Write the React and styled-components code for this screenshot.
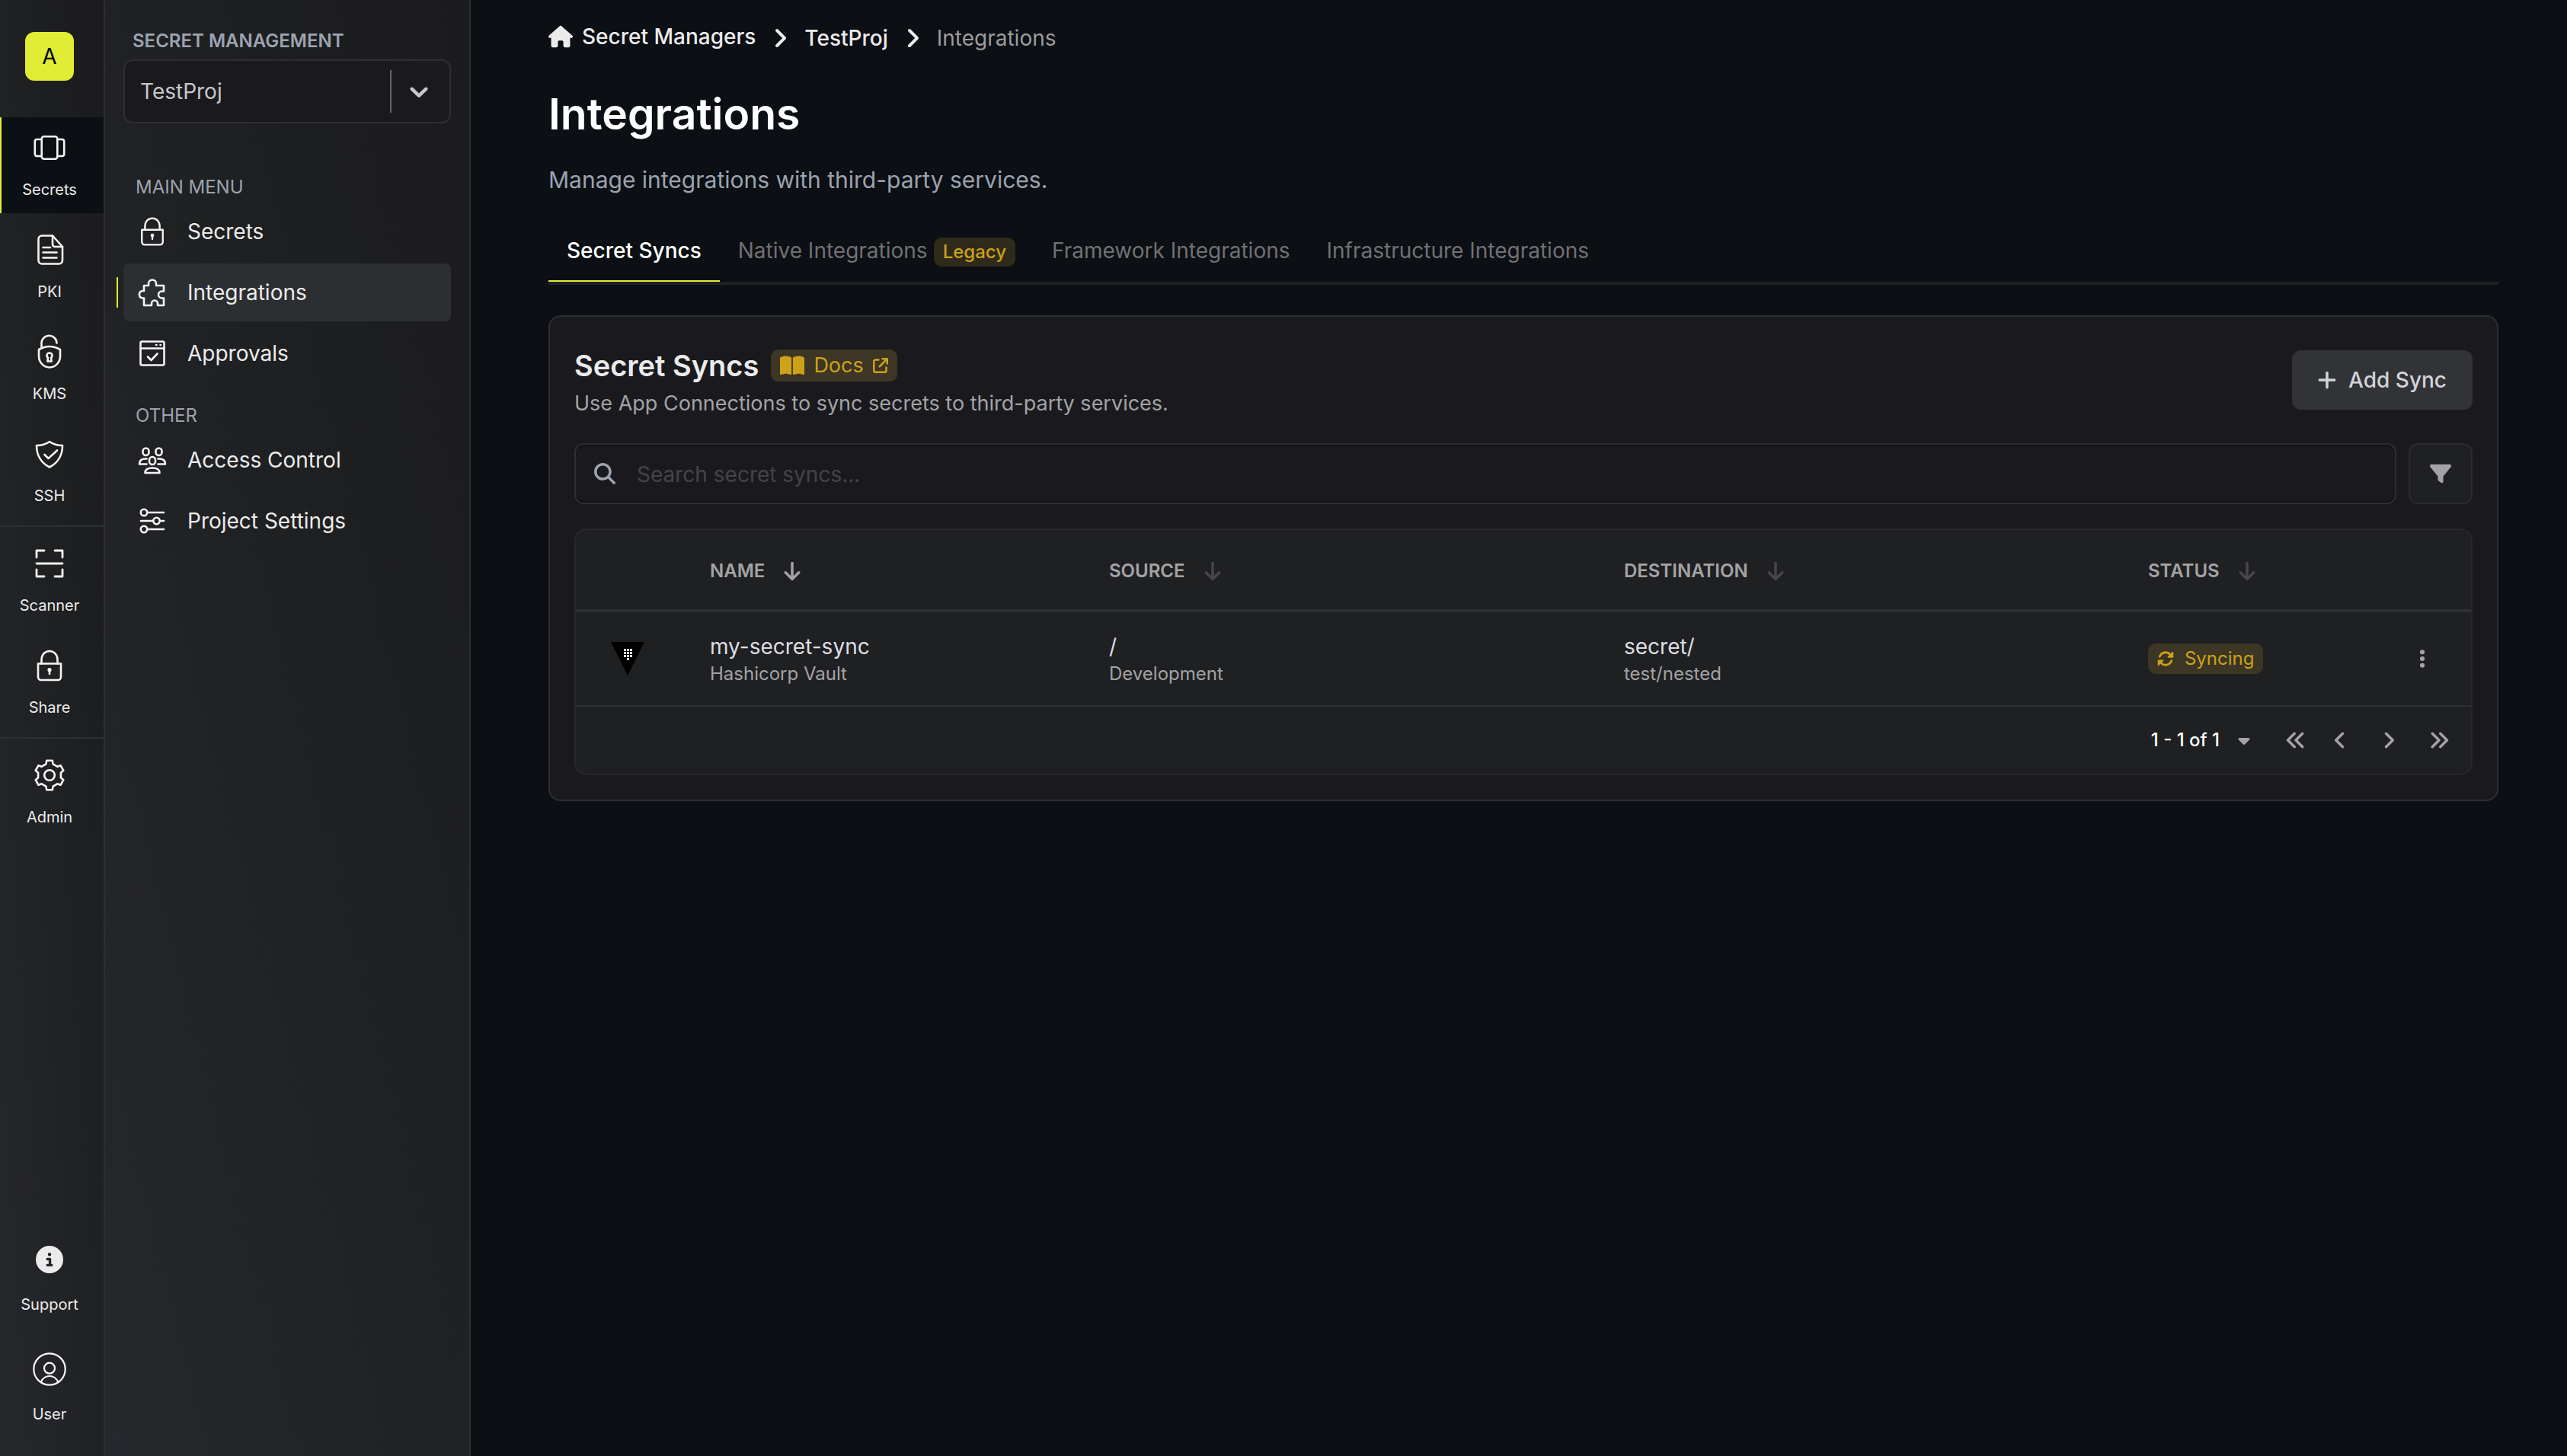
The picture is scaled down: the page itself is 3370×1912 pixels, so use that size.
import React from "react"
import styled, { createGlobalStyle } from "styled-components"
import {
  FaAngleLeft,
  FaAngleRight,
  FaAnglesLeft,
  FaAnglesRight,
  FaArrowDown,
  FaArrowUpRightFromSquare,
  FaBookOpen,
  FaCaretDown,
  FaCircleInfo,
  FaEllipsisVertical,
  FaFilter,
  FaHouse,
  FaMagnifyingGlass,
  FaPlus,
  FaRotate,
} from "react-icons/fa6"

const colors = {
  page: "#0c0f14",
  panel: "#1a1a1e",
  table: "#1f2022",
  line: "#2d2f33",
  hover: "#2c2f32",
  text: "#ebebeb",
  muted: "#a3a3a5",
  label: "#9ca3af",
  dim: "#707173",
  primary: "#e0ed34",
  yellow: "#cba21a",
}

const GlobalStyle = createGlobalStyle`
  *, *::before, *::after {
    box-sizing: border-box;
  }
  body {
    margin: 0;
    background: ${colors.page};
    color: ${colors.text};
    font-family: Inter, "Liberation Sans", sans-serif;
    font-size: 28px;
    line-height: 40px;
  }
  button, input, select {
    font: inherit;
    color: inherit;
    margin: 0;
    padding: 0;
    border: 0;
    background: none;
  }
  button {
    cursor: pointer;
  }
  a {
    color: inherit;
    text-decoration: none;
  }
  h1, h2, p, ol, ul {
    margin: 0;
    padding: 0;
    list-style: none;
  }
  svg {
    display: block;
    flex: none;
  }
`

const Layout = styled.div`
  display: flex;
  min-height: 100vh;
`

/* ---------- left rail ---------- */

const Rail = styled.nav`
  display: flex;
  flex-direction: column;
  flex: none;
  width: 138px;
  padding-bottom: 24px;
  border-right: 2px solid ${colors.line};
  background: linear-gradient(to top right, #27282d, #1f2123, #1b1b1d);
`

const OrgButton = styled.button`
  width: 64px;
  height: 64px;
  margin: 42px 0 48px 33px;
  border-radius: 12px;
  background: ${colors.primary};
  color: #000;
`

const RailGroup = styled.div`
  display: flex;
  flex-direction: column;
  gap: 8px;
  padding-bottom: 8px;
  margin-bottom: ${({ $last }) => ($last ? "auto" : "8px")};
  border-bottom: ${({ $last }) => ($last ? "0" : `2px solid ${colors.line}`)};
`

const RailBottom = styled.div`
  display: flex;
  flex-direction: column;
  gap: 14px;
`

const RailLink = styled.a`
  display: flex;
  flex-direction: column;
  align-items: center;
  gap: ${({ $wide }) => ($wide ? "20px" : "16px")};
  padding: 16px 8px 16px 0;
  border-left: 2px solid ${({ $active }) => ($active ? colors.primary : "transparent")};
  background: ${({ $active }) => ($active ? colors.page : "none")};
  font-size: 20px;
  line-height: 30px;
`

const RailIcon = styled.span`
  display: grid;
  place-items: center;
  width: 48px;
  height: 48px;
`

const LineIcon = styled.svg`
  width: ${({ $size }) => $size}px;
  height: ${({ $size }) => $size}px;
  fill: none;
  stroke: #f4f4f4;
  stroke-width: ${({ $stroke }) => $stroke || 2.6};
  stroke-linecap: round;
  stroke-linejoin: round;
`

/* ---------- project sidebar ---------- */

const Sidebar = styled.aside`
  flex: none;
  width: 480px;
  padding: 36px 24px;
  border-right: 2px solid ${colors.line};
  background: linear-gradient(to top right, #27282d, #1f2123, #1b1b1d);
`

const ProjectLabel = styled.label`
  display: block;
  padding: 0 12px 6px;
  color: ${colors.label};
  font-size: 24px;
  font-weight: 600;
  line-height: 36px;
`

const ProjectSelect = styled.div`
  display: flex;
  align-items: center;
  height: 84px;
  border: 2px solid ${colors.line};
  border-radius: 12px;
  background: ${colors.panel};
  color: #c8c8c9;

  select {
    flex: 1;
    height: 100%;
    padding-left: 20px;
    appearance: none;
    outline: none;
  }
  svg {
    width: 40px;
    height: 40px;
    margin: 0 20px 0 16px;
    fill: currentColor;
    pointer-events: none;
  }
`

const Separator = styled.span`
  width: 2px;
  height: 56px;
  background: #626365;
`

const MenuTitle = styled.p`
  padding: 4px 16px 0;
  margin-top: ${({ $first }) => ($first ? "60px" : "20px")};
  color: ${colors.label};
  font-size: 24px;
  line-height: 40px;
`

const Menu = styled.ul`
  display: flex;
  flex-direction: column;
  gap: 4px;
`

const MenuLink = styled.a`
  position: relative;
  display: flex;
  align-items: center;
  gap: 26px;
  height: 76px;
  padding-left: 18px;
  border-radius: 8px;
  background: ${({ $active }) => ($active ? colors.hover : "none")};

  &::before {
    content: "";
    display: ${({ $active }) => ($active ? "block" : "none")};
    position: absolute;
    left: -9px;
    top: 18px;
    width: 2px;
    height: 40px;
    background: ${colors.primary};
  }
`

const MenuIcon = styled.span`
  display: grid;
  place-content: center;
  width: 40px;
  height: 40px;
`

/* ---------- main area ---------- */

const Main = styled.main`
  flex: 1;
  min-width: 0;
  padding: 30px 0 60px 12px;
`

const Container = styled.div`
  width: 100%;
  max-width: 2560px;
  margin: 0 auto;
`

const Crumbs = styled.ol`
  display: flex;
  align-items: center;
  height: 40px;

  li {
    display: flex;
    align-items: center;
  }
  li > svg {
    margin: 0 16px;
  }
`

const Crumb = styled.a`
  display: flex;
  align-items: center;
  gap: 12px;
  padding-bottom: ${({ $home }) => ($home ? "4px" : "0")};
  color: ${({ $current }) => ($current ? "#9c9c9e" : colors.text)};
  font-weight: ${({ $current }) => ($current ? 400 : 500)};
`

const Title = styled.h1`
  margin-top: 44px;
  color: #fff;
  font-size: 57px;
  font-weight: 600;
  line-height: 72px;
`

const Subtitle = styled.p`
  margin: 26px 0 28px;
  color: ${colors.label};
  font-size: 30px;
  line-height: 48px;
`

const Tabs = styled.div`
  display: flex;
  margin-bottom: 40px;
  border-bottom: 4px solid #1f2023;
`

const Tab = styled.button`
  display: flex;
  align-items: center;
  gap: 8px;
  height: 82px;
  padding: 2px 24px 0;
  border-bottom: 2px solid ${({ $active }) => ($active ? colors.primary : "transparent")};
  color: ${({ $active }) => ($active ? "#fff" : colors.dim)};
  font-weight: ${({ $active }) => ($active ? 500 : 400)};
`

const Badge = styled.span`
  display: inline-flex;
  align-items: center;
  gap: ${({ $tall }) => ($tall ? "12px" : "14px")};
  height: ${({ $tall }) => ($tall ? "42px" : "40px")};
  padding: 0 12px;
  border-radius: 10px;
  background: #3d3624;
  color: ${colors.yellow};
  font-size: ${({ $tall }) => ($tall ? "27px" : "24px")};
`

const LegacyBadge = styled(Badge)`
  height: 38px;
  margin-top: 4px;
  background: #302a1b;
  font-weight: 500;
`

const Panel = styled.section`
  padding: 32px;
  border: 2px solid ${colors.line};
  border-radius: 16px;
  background: ${colors.panel};
`

const PanelHead = styled.div`
  display: flex;
  align-items: center;
  justify-content: space-between;
  margin-bottom: 32px;
`

const PanelTitle = styled.div`
  display: flex;
  align-items: center;
  gap: 16px;
  padding-top: 2px;

  h2 {
    font-size: 38px;
    font-weight: 600;
    line-height: 60px;
  }
`

const PanelText = styled.p`
  color: ${colors.muted};
  font-size: 27px;
`

const AddButton = styled.button`
  display: flex;
  align-items: center;
  gap: 14px;
  height: 78px;
  padding: 0 34px 0 32px;
  border-radius: 12px;
  background: #323337;
  color: #d2d4d8;
  font-weight: 500;
`

const Toolbar = styled.div`
  display: flex;
  gap: 16px;
  margin-bottom: 32px;
`

const SearchBox = styled.label`
  display: flex;
  flex: 1;
  align-items: center;
  gap: 28px;
  height: 80px;
  padding: 0 24px;
  border: 2px solid ${colors.line};
  border-radius: 12px;
  box-shadow: inset 0 2px 0 #101115, inset 0 -2px 0 #101115;
  color: ${colors.label};

  input {
    flex: 1;
    height: 100%;
    padding-top: 2px;
    outline: none;
  }
  input::placeholder {
    color: #434448;
    opacity: 1;
  }
`

const FilterButton = styled.button`
  display: grid;
  place-items: center;
  width: 84px;
  height: 80px;
  border: 2px solid #2a2b2e;
  border-radius: 12px;
  background: ${colors.table};
  color: ${colors.muted};
`

const TableBox = styled.div`
  border: 2px solid #27282b;
  border-radius: 16px;
  background: ${colors.table};
  overflow: hidden;
`

const Table = styled.table`
  width: 100%;
  border-collapse: separate;
  border-spacing: 0;
  table-layout: fixed;
  text-align: left;

  th, td {
    padding: 0 40px;
    border-bottom: 2px solid ${colors.line};
  }
  th {
    height: 108px;
    padding-top: 4px;
    border-bottom-width: 4px;
  }
  td {
    height: 124px;
  }
`

const HeadCell = styled.th`
  width: ${({ $width }) => $width || "auto"};
`

const SortButton = styled.button`
  display: flex;
  align-items: center;
  gap: 22px;
  color: ${colors.muted};
  font-size: 24px;
  font-weight: 600;

  svg {
    opacity: ${({ $sorted }) => ($sorted ? 1 : 0.3)};
  }
`

const CellText = styled.p`
  color: #dcdde1;
`

const CellNote = styled.p`
  color: ${colors.muted};
  font-size: 24px;
  line-height: 32px;
`

const KebabButton = styled.button`
  display: grid;
  place-items: center;
  width: 48px;
  height: 48px;
  color: ${colors.muted};
`

const Pagination = styled.div`
  display: flex;
  align-items: center;
  justify-content: flex-end;
  gap: 8px;
  height: 88px;
  padding-right: 12px;
`

const RangeButton = styled.button`
  display: flex;
  align-items: center;
  gap: 20px;
  margin-right: 18px;
  color: #fff;
  font-size: 24px;
  font-weight: 500;

  svg {
    color: ${colors.muted};
  }
`

const PageButtons = styled.div`
  display: flex;
`

const PageButton = styled.button`
  display: grid;
  place-items: center;
  width: ${({ $double }) => ($double ? "60px" : "56px")};
  height: 56px;
  color: ${colors.muted};
`

/* ---------- icons ---------- */

const CarouselIcon = () => (
  <LineIcon $size={48} viewBox="0 0 48 48" aria-hidden="true">
    <rect x="13.7" y="9.3" width="20.6" height="29.4" rx="3" />
    <path d="M13.7 13H7.5a2.7 2.7 0 0 0-2.7 2.7v16.6A2.7 2.7 0 0 0 7.5 35h6.2M34.3 13h6.2a2.7 2.7 0 0 1 2.7 2.7v16.6a2.7 2.7 0 0 1-2.7 2.7h-6.2" />
  </LineIcon>
)

const DocumentIcon = () => (
  <LineIcon $size={48} viewBox="0 0 48 48" aria-hidden="true">
    <path d="M28 5.5H14a4.5 4.5 0 0 0-4.5 4.5v28a4.5 4.5 0 0 0 4.5 4.5h22.5a4.5 4.5 0 0 0 4.5-4.5V20z" />
    <path d="M28 5.5V17a3 3 0 0 0 3 3h10M15.5 21H25M15.5 27.5h18M15.5 34.5h18" />
  </LineIcon>
)

const ShieldLockIcon = () => (
  <LineIcon $size={48} viewBox="0 0 48 48" aria-hidden="true">
    <path d="M24 17c4.5 0 9.5 1.5 14 4v8.5c0 8-6 15-14 15s-14-7-14-15V21c4.500-2.500 9.500-4 14-4z" />
    <path d="M13.5 18.5V13a10 10 0 0 1 20-.5" />
    <path d="M24 25.500a3.400 3.400 0 0 1 2 6.200l.6 4.800h-5.200l.6-4.800a3.400 3.400 0 0 1 2-6.200z" />
  </LineIcon>
)

const ShieldCheckIcon = () => (
  <LineIcon $size={48} viewBox="0 0 48 48" aria-hidden="true">
    <path d="M24 8c5 3.500 11 5 17 5 0 12.500-6 23-17 28.500C13 36 7 25.500 7 13c6 0 12-1.500 17-5z" />
    <path d="M17.500 25l5 5L34 19.500" />
  </LineIcon>
)

const ScanIcon = () => (
  <LineIcon $size={48} viewBox="0 0 48 48" $stroke={2.8} aria-hidden="true">
    <path d="M7 16V7h10M31 7h10v9M7 32v9h10M31 41h10v-9M7 24h34" />
  </LineIcon>
)

const LockIcon = ({ size = 48 }) => (
  <LineIcon $size={size} viewBox="0 0 48 48" aria-hidden="true">
    <path d="M9 21.500h30V39a4 4 0 0 1-4 4H13a4 4 0 0 1-4-4z" />
    <path d="M13.500 21.500V16a10.500 11 0 0 1 21 0v5.500" />
    <circle cx="24" cy="29.500" r="1.300" />
    <path d="M24 30v5" />
  </LineIcon>
)

const GearIcon = () => (
  <LineIcon $size={48} viewBox="0 0 48 48" aria-hidden="true">
    <path d="M27.8 4.7l.8 4.7 5.7 3.3 4.2-1.5 3.8 6.6-3.4 2.9v6.600l3.4 2.900-3.800 6.600-4.200-1.500-5.700 3.300-.8 4.700h-7.600l-.8-4.700-5.700-3.300-4.200 1.500-3.800-6.600 3.400-2.900v-6.600l-3.400-2.900 3.800-6.600 4.200 1.500 5.700-3.300.8-4.700z" />
    <circle cx="24" cy="24" r="6.8" />
  </LineIcon>
)

const UserIcon = () => (
  <LineIcon $size={48} viewBox="0 0 48 48" $stroke={2.2} aria-hidden="true">
    <circle cx="24" cy="24" r="20.7" />
    <circle cx="24" cy="22.7" r="7" />
    <path d="M12.5 41c2.5-5 6.5-8 11.5-8s9 3 11.5 8" />
  </LineIcon>
)

const PuzzleIcon = () => (
  <LineIcon $size={40} viewBox="0 0 40 40" aria-hidden="true">
    <path d="M9 11h6V8.500a5 5 0 0 1 10 0V11h10v7.500h-2.500a4.500 4.500 0 0 0 0 9H35V37h-8v-2.500a4 4 0 0 0-8 0V37H9v-9.500H7a4.800 4.800 0 0 1 0-9.500h2z" />
  </LineIcon>
)

const ApprovalIcon = () => (
  <LineIcon $size={40} viewBox="0 0 40 40" aria-hidden="true">
    <rect x="4.5" y="4.5" width="31" height="31" rx="2" />
    <path d="M4.500 13.500h31M14 24.500l4.500 4.500 8-8.500" />
    <path d="M25 9h.5M30.500 9h.5" />
  </LineIcon>
)

const PeopleIcon = () => (
  <LineIcon $size={40} viewBox="0 0 40 40" aria-hidden="true">
    <rect x="7.5" y="4.5" width="8" height="9.5" rx="4" />
    <rect x="24.5" y="4.5" width="8" height="9.5" rx="4" />
    <rect x="16" y="16" width="8" height="10" rx="4" />
    <path d="M12.500 25.500H3c0-4.500 2.500-7 8-7h1.500M27.500 25.500H37c0-4.500-2.500-7-8-7h-1.500" />
    <path d="M10.500 37c0-4.500 3-6.500 9.500-6.500s9.500 2 9.500 6.500z" />
  </LineIcon>
)

const SlidersIcon = () => (
  <LineIcon $size={40} viewBox="0 0 40 40" aria-hidden="true">
    <circle cx="9" cy="9" r="4.2" />
    <circle cx="25.5" cy="20" r="4.2" />
    <circle cx="9" cy="31" r="4.2" />
    <path d="M13.500 9H35M5 20h16M30 20h5M13.500 31H35" />
  </LineIcon>
)

const VaultLogo = () => (
  <svg width="56" height="44" viewBox="-6 0 56 44" role="img" aria-label="Hashicorp Vault">
    <path d="M0 0h44L22 44z" fill="#000" />
    <path
      d="M17 9h3v3h-3zM21 9h3v3h-3zM25 9h3v3h-3zM17 13h3v3h-3zM21 13h3v3h-3zM25 13h3v3h-3zM17 17h3v3h-3zM21 17h3v3h-3zM25 17h3v3h-3zM21 21h3v3h-3z"
      fill="#fff"
    />
  </svg>
)

/* ---------- data ---------- */

const railGroups = [
  [
    { name: "Secrets", icon: <CarouselIcon />, active: true },
    { name: "PKI", icon: <DocumentIcon /> },
    { name: "KMS", icon: <ShieldLockIcon /> },
    { name: "SSH", icon: <ShieldCheckIcon /> },
  ],
  [
    { name: "Scanner", icon: <ScanIcon /> },
    { name: "Share", icon: <LockIcon /> },
  ],
  [{ name: "Admin", icon: <GearIcon /> }],
]

const mainMenu = [
  { name: "Secrets", icon: <LockIcon size={44} /> },
  { name: "Integrations", icon: <PuzzleIcon />, active: true },
  { name: "Approvals", icon: <ApprovalIcon /> },
]

const otherMenu = [
  { name: "Access Control", icon: <PeopleIcon /> },
  { name: "Project Settings", icon: <SlidersIcon /> },
]

const tabs = ["Secret Syncs", "Native Integrations", "Framework Integrations", "Infrastructure Integrations"]

const columns = [
  { name: "Name", width: "21.06%", sorted: true },
  { name: "Source", width: "27.17%" },
  { name: "Destination", width: "27.65%" },
  { name: "Status" },
]

const RailItem = ({ name, icon, active, wide }) => (
  <RailLink href="#" $active={active} $wide={wide} aria-current={active ? "page" : undefined}>
    <RailIcon>{icon}</RailIcon>
    {name}
  </RailLink>
)

const MenuList = ({ items }) => (
  <Menu>
    {items.map((item) => (
      <li key={item.name}>
        <MenuLink href="#" $active={item.active}>
          <MenuIcon>{item.icon}</MenuIcon>
          {item.name}
        </MenuLink>
      </li>
    ))}
  </Menu>
)

const App = () => {
  const [tab, setTab] = React.useState("Secret Syncs")
  const [search, setSearch] = React.useState("")

  return (
    <Layout>
      <GlobalStyle />
      <Rail>
        <OrgButton>A</OrgButton>
        {railGroups.map((group, i) => (
          <RailGroup key={i} $last={i === railGroups.length - 1}>
            {group.map((item) => (
              <RailItem key={item.name} {...item} />
            ))}
          </RailGroup>
        ))}
        <RailBottom>
          <RailItem name="Support" icon={<FaCircleInfo size={36} />} wide />
          <RailItem name="User" icon={<UserIcon />} wide />
        </RailBottom>
      </Rail>

      <Sidebar>
        <ProjectLabel htmlFor="project">SECRET MANAGEMENT</ProjectLabel>
        <ProjectSelect>
          <select id="project" defaultValue="TestProj">
            <option>TestProj</option>
          </select>
          <Separator />
          <svg viewBox="0 0 20 20" aria-hidden="true">
            <path d="M4.516 7.548c0.436-0.446 1.043-0.481 1.576 0l3.908 3.747 3.908-3.747c0.533-0.481 1.141-0.446 1.574 0 0.436 0.445 0.408 1.197 0 1.615-0.406 0.418-4.695 4.502-4.695 4.502-0.217 0.223-0.502 0.335-0.787 0.335s-0.57-0.112-0.789-0.335c0 0-4.287-4.084-4.695-4.502s-0.436-1.17 0-1.615z" />
          </svg>
        </ProjectSelect>
        <MenuTitle $first>MAIN MENU</MenuTitle>
        <MenuList items={mainMenu} />
        <MenuTitle>OTHER</MenuTitle>
        <MenuList items={otherMenu} />
      </Sidebar>

      <Main>
        <Container>
          <Crumbs>
            <li>
              <Crumb href="#" $home>
                <FaHouse size={32} />
                Secret Managers
              </Crumb>
              <FaAngleRight size={32} />
            </li>
            <li>
              <Crumb href="#">TestProj</Crumb>
              <FaAngleRight size={32} />
            </li>
            <li>
              <Crumb as="span" $current>Integrations</Crumb>
            </li>
          </Crumbs>
          <Title>Integrations</Title>
          <Subtitle>Manage integrations with third-party services.</Subtitle>

          <Tabs role="tablist">
            {tabs.map((name) => (
              <Tab key={name} role="tab" aria-selected={tab === name} $active={tab === name} onClick={() => setTab(name)}>
                {name}
                {name === "Native Integrations" && <LegacyBadge>Legacy</LegacyBadge>}
              </Tab>
            ))}
          </Tabs>

          <Panel>
            <PanelHead>
              <div>
                <PanelTitle>
                  <h2>Secret Syncs</h2>
                  <Badge as="a" href="#" $tall>
                    <FaBookOpen size={32} />
                    Docs
                    <FaArrowUpRightFromSquare size={20} />
                  </Badge>
                </PanelTitle>
                <PanelText>Use App Connections to sync secrets to third-party services.</PanelText>
              </div>
              <AddButton>
                <FaPlus size={28} />
                Add Sync
              </AddButton>
            </PanelHead>

            <Toolbar>
              <SearchBox>
                <FaMagnifyingGlass size={28} />
                <input
                  aria-label="Search secret syncs"
                  placeholder="Search secret syncs..."
                  value={search}
                  onChange={(e) => setSearch(e.target.value)}
                />
              </SearchBox>
              <FilterButton aria-label="Filter">
                <FaFilter size={28} />
              </FilterButton>
            </Toolbar>

            <TableBox>
              <Table>
                <thead>
                  <tr>
                    <HeadCell $width="136px" />
                    {columns.map((col) => (
                      <HeadCell key={col.name} $width={col.width}>
                        <SortButton $sorted={col.sorted}>
                          {col.name.toUpperCase()}
                          <FaArrowDown size={28} />
                        </SortButton>
                      </HeadCell>
                    ))}
                    <HeadCell $width="128px" />
                  </tr>
                </thead>
                <tbody>
                  <tr>
                    <td>
                      <VaultLogo />
                    </td>
                    <td>
                      <CellText>my-secret-sync</CellText>
                      <CellNote>Hashicorp Vault</CellNote>
                    </td>
                    <td>
                      <CellText>/</CellText>
                      <CellNote>Development</CellNote>
                    </td>
                    <td>
                      <CellText>secret/</CellText>
                      <CellNote>test/nested</CellNote>
                    </td>
                    <td>
                      <Badge>
                        <FaRotate size={22} />
                        Syncing
                      </Badge>
                    </td>
                    <td>
                      <KebabButton aria-label="Options">
                        <FaEllipsisVertical size={28} />
                      </KebabButton>
                    </td>
                  </tr>
                </tbody>
              </Table>
              <Pagination>
                <RangeButton>
                  1 - 1 of 1
                  <FaCaretDown size={24} />
                </RangeButton>
                <PageButtons>
                  <PageButton $double aria-label="First page">
                    <FaAnglesLeft size={28} />
                  </PageButton>
                  <PageButton aria-label="Previous page">
                    <FaAngleLeft size={28} />
                  </PageButton>
                </PageButtons>
                <PageButton aria-label="Next page">
                  <FaAngleRight size={28} />
                </PageButton>
                <PageButton $double aria-label="Last page">
                  <FaAnglesRight size={28} />
                </PageButton>
              </Pagination>
            </TableBox>
          </Panel>
        </Container>
      </Main>
    </Layout>
  )
}

export default App
